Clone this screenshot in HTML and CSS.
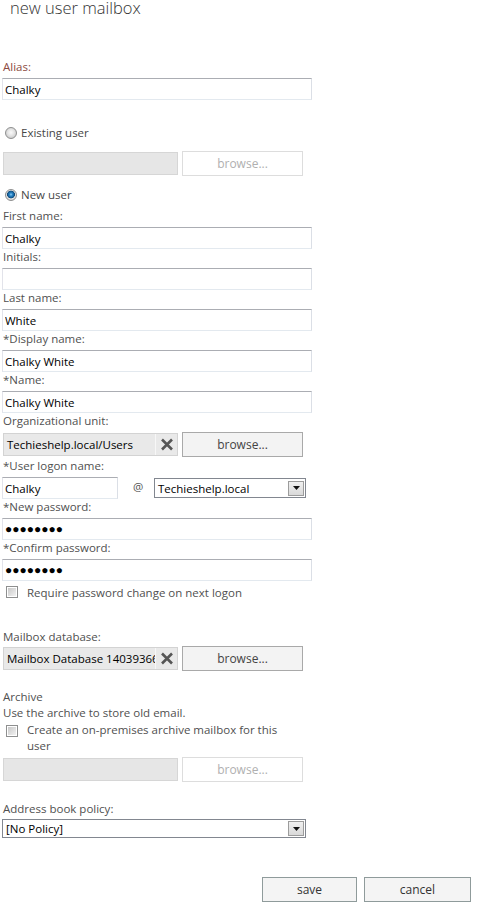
FILE: index.html
```html
<!DOCTYPE html>
<html lang="en">
<head>
<meta charset="utf-8">
<title>new user mailbox</title>
<link rel="stylesheet" href="styles.css">
</head>
<body>
<div class="dialog">
  <h1 class="title">new user mailbox</h1>

  <div class="field alias-field">
    <label class="lbl lbl-alias">Alias:</label>
    <input class="txt" type="text" value="Chalky">
  </div>

  <label class="radio-row existing"><input class="radio" type="radio" name="usertype"><span>Existing user</span></label>
  <div class="picker picker-existing">
    <div class="pick-field disabled"></div>
    <button class="browse off" type="button">browse...</button>
  </div>

  <label class="radio-row newuser"><input class="radio" type="radio" name="usertype" checked><span>New user</span></label>

  <div class="field first">
    <label class="lbl">First name:</label>
    <input class="txt" type="text" value="Chalky">
  </div>
  <div class="field">
    <label class="lbl">Initials:</label>
    <input class="txt" type="text" value="">
  </div>
  <div class="field">
    <label class="lbl">Last name:</label>
    <input class="txt" type="text" value="White">
  </div>
  <div class="field">
    <label class="lbl">*Display name:</label>
    <input class="txt" type="text" value="Chalky White">
  </div>
  <div class="field">
    <label class="lbl">*Name:</label>
    <input class="txt" type="text" value="Chalky White">
  </div>

  <div class="field">
    <label class="lbl">Organizational unit:</label>
    <div class="picker">
      <div class="pick-field"><span class="pick-text">Techieshelp.local/Users</span><span class="clear"><svg width="14" height="13" viewBox="0 0 14 13"><path d="M2 1.5L12 11.5M12 1.5L2 11.5" stroke="#555" stroke-width="2.6" fill="none"/></svg></span></div>
      <button class="browse" type="button">browse...</button>
    </div>
  </div>

  <div class="field logon-field">
    <label class="lbl">*User logon name:</label>
    <div class="logon-row">
      <input class="txt logon" type="text" value="Chalky">
      <span class="at">@</span>
      <div class="combo domain"><span class="combo-text">Techieshelp.local</span><span class="arrow"><svg width="7" height="4" viewBox="0 0 7 4"><path d="M0 0H7L3.5 4Z" fill="#111"/></svg></span></div>
    </div>
  </div>
  <div class="field">
    <label class="lbl">*New password:</label>
    <input class="txt pwd" type="text" value="●●●●●●●●">
  </div>
  <div class="field">
    <label class="lbl">*Confirm password:</label>
    <input class="txt pwd" type="text" value="●●●●●●●●">
  </div>
  <label class="check-row require"><input class="check" type="checkbox"><span>Require password change on next logon</span></label>

  <div class="field mbx-field">
    <label class="lbl">Mailbox database:</label>
    <div class="picker">
      <div class="pick-field"><span class="pick-text">Mailbox Database 1403936624</span><span class="clear"><svg width="14" height="13" viewBox="0 0 14 13"><path d="M2 1.5L12 11.5M12 1.5L2 11.5" stroke="#555" stroke-width="2.6" fill="none"/></svg></span></div>
      <button class="browse" type="button">browse...</button>
    </div>
  </div>

  <div class="archive">
    <div class="line">Archive</div>
    <div class="line">Use the archive to store old email.</div>
    <label class="check-row archive-check"><input class="check" type="checkbox"><span>Create an on-premises archive mailbox for this<br>user</span></label>
    <div class="picker picker-archive">
      <div class="pick-field disabled"></div>
      <button class="browse off" type="button">browse...</button>
    </div>
  </div>

  <div class="field abp-field">
    <label class="lbl">Address book policy:</label>
    <div class="combo policy"><span class="combo-text">[No Policy]</span><span class="arrow"><svg width="7" height="4" viewBox="0 0 7 4"><path d="M0 0H7L3.5 4Z" fill="#111"/></svg></span></div>
  </div>

  <div class="actions">
    <button class="btn save" type="button">save</button>
    <button class="btn cancel" type="button">cancel</button>
  </div>
</div>
</body>
</html>
```

FILE: styles.css
```css
html, body {
  margin: 0;
  padding: 0;
  background: #fff;
}
body {
  font-family: "Open Sans", "Noto Sans", sans-serif;
  font-size: 11.5px;
  color: #555;
}
.dialog {
  padding-left: 2px;
  width: 469px;
}
.title {
  margin: 0 0 0 8px;
  height: 17px;
  font-size: 16.5px;
  line-height: 16px;
  font-weight: 300;
  color: #333;
}
.field {
  display: flex;
  flex-direction: column;
}
.lbl {
  display: block;
  height: 16px;
  line-height: 16px;
  margin: 0 0 3px 1px;
  color: #505050;
  white-space: nowrap;
}
.lbl-alias {
  color: #8c4a3f;
}
.alias-field {
  margin-top: 42px;
}
.txt {
  display: block;
  box-sizing: border-box;
  width: 310px;
  height: 22px;
  margin: 0;
  padding: 0 2px;
  border: 1px solid;
  border-color: #abadb3 #dbdfe6 #e3e9ef #e2e3ea;
  background: #fff;
  font: inherit;
  color: #000;
  outline: none;
}
.pwd {
  font-family: "Liberation Sans", sans-serif;
  font-size: 12px;
}
.radio-row {
  display: flex;
  align-items: center;
  gap: 4px;
  height: 16px;
  line-height: 16px;
  margin-left: 3px;
  color: #474747;
}
.existing {
  margin-top: 25px;
}
.newuser {
  margin-top: 11px;
}
.radio {
  appearance: none;
  -webkit-appearance: none;
  box-sizing: border-box;
  width: 12px;
  height: 12px;
  margin: 0;
  border-radius: 50%;
  border: 1px solid #8e8f8f;
  background: radial-gradient(circle at 50% 45%, #fafafa 0, #e6e6e6 3px, #c9c9c9 6px);
}
.radio:checked {
  background: radial-gradient(circle at 50% 45%, #8fd0f5 0, #2b86c8 1.5px, #155f98 3px, #0d4470 3.6px, #e9e9e9 4.2px, #cdcdcd 6px);
}
.picker {
  display: flex;
  align-items: center;
  height: 25px;
}
.picker-existing {
  margin-top: 10px;
}
.pick-field {
  display: flex;
  box-sizing: border-box;
  width: 175px;
  height: 23px;
  margin-left: 1px;
  border: 1px solid #d3d3d3;
  background: #e9e9e9;
}
.pick-field.disabled {
  background: #e6e6e6;
  border-color: #d6d6d6;
}
.pick-text {
  flex: 1;
  min-width: 0;
  overflow: hidden;
  white-space: nowrap;
  padding-left: 3px;
  line-height: 21px;
  color: #000;
}
.clear {
  display: flex;
  align-items: center;
  justify-content: center;
  width: 21px;
  border-left: 1px solid #f7f7f7;
}
.browse {
  box-sizing: border-box;
  width: 121px;
  height: 25px;
  margin: 0 0 0 4px;
  padding: 0;
  border: 1px solid #a9a9a9;
  background: #f3f3f3;
  font-family: inherit;
  font-size: 12px;
  color: #444;
}
.browse.off {
  border-color: #dddddd;
  background: #fff;
  color: #b0b0b0;
}
.first {
  margin-top: 5px;
}
.logon-field .lbl {
  margin-top: 1px;
}
.logon-row {
  display: flex;
  align-items: center;
  height: 22px;
}
.logon {
  width: 116px;
}
.at {
  box-sizing: border-box;
  width: 36px;
  padding-left: 15px;
  margin-top: -3px;
  color: #555;
}
.combo {
  display: flex;
  align-items: center;
  box-sizing: border-box;
  height: 20px;
  border: 1px solid #828790;
  background: #fff;
  color: #000;
}
.domain {
  width: 152px;
}
.policy {
  width: 304px;
  height: 19px;
}
.combo-text {
  flex: 1;
  padding-left: 3px;
  white-space: nowrap;
  overflow: hidden;
}
.arrow {
  display: flex;
  align-items: center;
  justify-content: center;
  box-sizing: border-box;
  width: 16px;
  height: 15px;
  margin-right: 1px;
  border: 1px solid #9c9c9c;
  background: linear-gradient(#f0f0f0, #d9d9d9);
}
.check-row {
  display: flex;
  align-items: flex-start;
  gap: 9px;
  line-height: 16px;
  margin-left: 4px;
  color: #505050;
}
.require {
  margin-top: 4px;
}
.check {
  appearance: none;
  -webkit-appearance: none;
  box-sizing: border-box;
  flex: none;
  width: 12px;
  height: 12px;
  margin: 1px 0 0 0;
  padding: 1px;
  border: 1px solid #8e8f8f;
  background: linear-gradient(135deg, #c8c8c8, #f2f2f2) content-box, #fff;
}
.mbx-field {
  margin-top: 28px;
}
.mbx-field .lbl {
  margin-bottom: 1px;
}
.archive {
  margin-top: 18px;
}
.line {
  line-height: 16px;
  margin-left: 1px;
  color: #505050;
}
.archive-check {
  margin-top: 1px;
}
.archive-check .check {
  margin-top: 3px;
}
.picker-archive {
  margin-top: 3px;
}
.abp-field {
  margin-top: 19px;
}
.abp-field .lbl {
  margin-bottom: 2px;
}
.actions {
  display: flex;
  justify-content: flex-end;
  gap: 7px;
  margin-top: 39px;
}
.btn {
  box-sizing: border-box;
  height: 25px;
  margin: 0;
  padding: 0;
  border: 1px solid #8f9b9b;
  background: #f4f4f4;
  font-family: inherit;
  font-size: 12px;
  color: #333;
}
.save {
  width: 95px;
}
.cancel {
  width: 107px;
}
```
